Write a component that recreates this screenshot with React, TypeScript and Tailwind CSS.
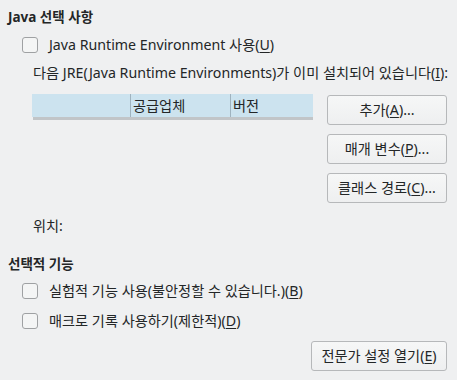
import React from 'react';

const font = { fontFamily: '"Noto Sans", "Noto Sans CJK KR", sans-serif' };

function Mn({ children }: { children: React.ReactNode }) {
  return <span className="underline underline-offset-2">{children}</span>;
}

function CheckRow({ children }: { children: React.ReactNode }) {
  return (
    <div className="flex h-[20px] items-center pl-[14px]">
      <div className="h-[16px] w-[16px] rounded-[3px] border border-[#9fa1a3] bg-[#f4f5f5]" />
      <span className="ml-[11px]">{children}</span>
    </div>
  );
}

function Btn({ children, w = 'w-[120px]' }: { children: React.ReactNode; w?: string }) {
  return (
    <div
      className={`flex h-[30px] ${w} items-center justify-center rounded-[3px] border border-[#b6b8ba] bg-gradient-to-b from-[#f6f7f7] to-[#eeeff0]`}
    >
      {children}
    </div>
  );
}

export default function App() {
  return (
    <div
      className="flex h-[380px] w-[457px] flex-col bg-[#eff0f1] pl-[8px] pr-[10px] text-[14.2px] text-[#232627]"
      style={font}
    >
      {/* Java section */}
      <div className="mt-[6px] flex h-[22px] items-center text-[13.5px] font-bold">Java 선택 사항</div>
      <div className="mt-[7px]">
        <CheckRow>
          Java Runtime Environment 사용(<Mn>U</Mn>)
        </CheckRow>
      </div>
      <div className="mt-[7px] flex h-[21px] items-center whitespace-nowrap pl-[25px]">
        다음 JRE(Java Runtime Environments)가 이미 설치되어 있습니다(<Mn>I</Mn>):
      </div>

      <div className="mt-[11px] flex pl-[24px]">
        <div className="w-[281px]">
          <div className="flex h-[23px] bg-[#cce3ef]">
            <div className="w-[99px] border-r border-[#9fb3bf]" />
            <div className="flex w-[100px] items-center border-r border-[#9fb3bf] pl-[2px]">공급업체</div>
            <div className="flex items-center pl-[2px]">버전</div>
          </div>
          <div className="ml-[1px] h-[3px] bg-[#c1c5c8]" />
        </div>
        <div className="ml-auto mt-[1px] flex flex-col gap-[9px]">
          <Btn>
            추가(<Mn>A</Mn>)...
          </Btn>
          <Btn>
            매개 변수(<Mn>P</Mn>)...
          </Btn>
          <Btn>
            클래스 경로(<Mn>C</Mn>)...
          </Btn>
        </div>
      </div>

      <div className="mt-[13px] flex h-[20px] items-center pl-[25px]">위치:</div>

      {/* optional features */}
      <div className="mt-[17px] flex h-[22px] items-center text-[13.5px] font-bold">선택적 기능</div>
      <div className="mt-[6px]">
        <CheckRow>
          실험적 기능 사용(불안정할 수 있습니다.)(<Mn>B</Mn>)
        </CheckRow>
      </div>
      <div className="mt-[10px]">
        <CheckRow>
          매크로 기록 사용하기(제한적)(<Mn>D</Mn>)
        </CheckRow>
      </div>
      <div className="mt-[10px] flex justify-end">
        <Btn w="w-[136px]">
          전문가 설정 열기(<Mn>E</Mn>)
        </Btn>
      </div>
    </div>
  );
}
